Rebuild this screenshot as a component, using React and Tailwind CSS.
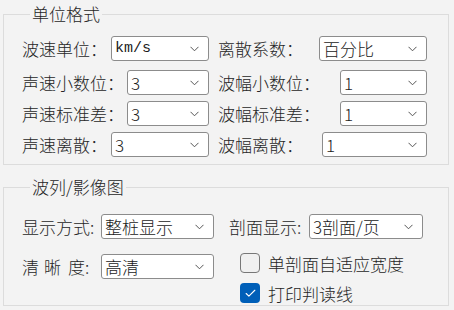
import { Check } from 'lucide-react'

const font = { fontFamily: '"Noto Sans CJK SC", "Noto Sans", sans-serif' }

function Chevron() {
  return (
    <svg width="9" height="6" viewBox="0 0 9 6" className="shrink-0">
      <path d="M0.5 0.8 L4.5 4.8 L8.5 0.8" fill="none" stroke="#555" strokeWidth="1" />
    </svg>
  )
}

function Combo({ value, className, mono }) {
  return (
    <div className={`h-[25px] bg-white border border-[#8c8c8c] rounded-[3px] flex items-center pl-[3px] pr-[9px] ${className}`}>
      <span
        className={`flex-1 text-[#1a1a1a] leading-none whitespace-nowrap ${mono ? 'text-[15px] font-["Liberation_Mono",monospace]' : 'text-[17px]'}`}
      >
        {value}
      </span>
      <Chevron />
    </div>
  )
}

function Field({ label, value, width, mono }) {
  return (
    <div className="flex items-center">
      <span className="text-[17px] leading-none text-[#262626] whitespace-nowrap">{label}</span>
      <Combo value={value} mono={mono} className={`ml-auto ${width}`} />
    </div>
  )
}

function Box({ checked, label }) {
  return (
    <div className="flex items-center">
      {checked ? (
        <div className="w-[20px] h-[20px] rounded-[4px] bg-[#005fb8] flex items-center justify-center">
          <Check size={13} strokeWidth={2} className="text-white" />
        </div>
      ) : (
        <div className="w-[20px] h-[20px] rounded-[4px] bg-[#f0f0f0] border border-[#777]" />
      )}
      <span className="ml-[8px] text-[17px] leading-none text-[#262626]">{label}</span>
    </div>
  )
}

export default function App() {
  return (
    <div className="w-[454px] h-[310px] bg-[#f3f3f3] pl-[3px] pr-[5px] overflow-hidden font-light" style={font}>
      {/* 单位格式 */}
      <fieldset className="border border-[#dcdcdc] pl-[18px] pr-[21px] pb-[7px]">
        <legend className="ml-[8px] px-[2px] h-[28px] text-[17px] leading-[28px] text-[#262626]">单位格式</legend>

        <div className="mt-[8px] grid grid-cols-[187px_209px] gap-x-[9px]">
          <Field label="波速单位：" value="km/s" width="w-[98px]" mono />
          <Field label="离散系数：" value="百分比" width="w-[108px]" />
        </div>
        <div className="mt-[9px] grid grid-cols-[187px_209px] gap-x-[9px]">
          <Field label="声速小数位：" value="3" width="w-[82px]" />
          <Field label="波幅小数位：" value="1" width="w-[87px]" />
        </div>
        <div className="mt-[6px] grid grid-cols-[187px_209px] gap-x-[9px]">
          <Field label="声速标准差：" value="3" width="w-[82px]" />
          <Field label="波幅标准差：" value="1" width="w-[87px]" />
        </div>
        <div className="mt-[6px] grid grid-cols-[187px_209px] gap-x-[9px]">
          <Field label="声速离散：" value="3" width="w-[98px]" />
          <Field label="波幅离散：" value="1" width="w-[105px]" />
        </div>
      </fieldset>

      {/* 波列/影像图 */}
      <fieldset className="mt-[8px] border border-[#dcdcdc] pl-[18px] pb-[2px]">
        <legend className="ml-[8px] px-[2px] h-[28px] text-[17px] leading-[28px] text-[#262626]">波列/影像图</legend>

        <div className="mt-[13px] flex">
          <div className="w-[192px] flex flex-col gap-[15px]">
            <Field label="显示方式:" value="整桩显示" width="w-[113px]" />
            <div className="flex items-center">
              <span className="text-[17px] leading-none text-[#262626] whitespace-nowrap">
                清<span className="inline-block w-[5px]" />晰<span className="inline-block w-[7px]" />度:
              </span>
              <Combo value="高清" className="ml-auto w-[113px]" />
            </div>
          </div>
          <div className="ml-[15px] w-[194px] flex flex-col">
            <Field label="剖面显示:" value="3剖面/页" width="w-[114px]" />
            <div className="mt-[14px] ml-[11px] flex flex-col gap-[10px]">
              <Box label="单剖面自适应宽度" />
              <Box checked label="打印判读线" />
            </div>
          </div>
        </div>
      </fieldset>
    </div>
  )
}
